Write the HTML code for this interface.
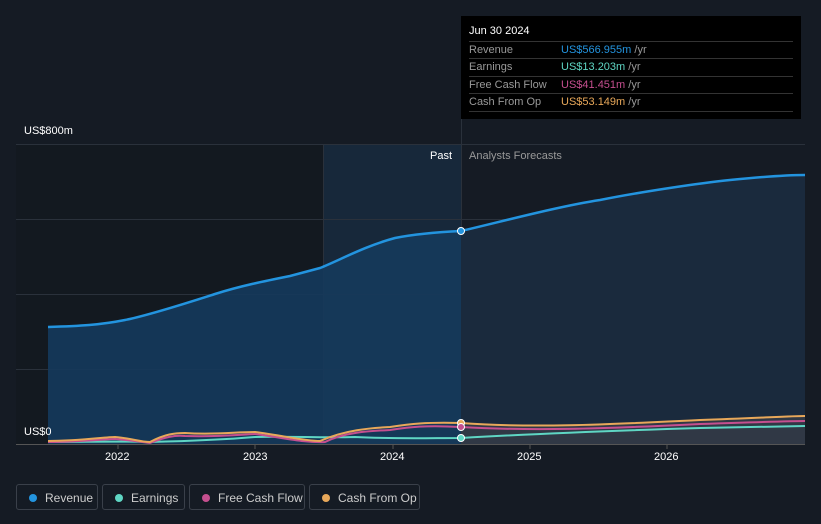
<!DOCTYPE html><html><head><style>
body{margin:0;background:#151b24;width:821px;height:524px;overflow:hidden;font-family:"Liberation Sans",sans-serif;position:relative}
.t{position:absolute;font-size:11px;color:#fff}
.tip{position:absolute;left:461px;top:16px;width:340px;height:103px;background:#000;}
.row{position:absolute;left:8px;width:324px;border-top:1px solid #333;height:17px;font-size:11px;color:#999;line-height:17px}
.row span{position:absolute;left:92px}
.leg{position:absolute;top:484px;height:26px;border:1px solid #3a404a;border-radius:3px;font-size:12px;color:#ccc;line-height:26px;box-sizing:border-box}
.leg i{position:absolute;left:12px;top:9px;width:8px;height:8px;border-radius:50%}
</style></head><body>
<svg width="821" height="524" style="position:absolute;left:0;top:0">
<rect x="16" y="144" width="307" height="300" fill="#131920"/>
<rect x="323" y="144" width="138" height="300" fill="#17283a"/>
<g stroke="#2a313b" stroke-width="1">
<line x1="16" y1="144.5" x2="805" y2="144.5"/><line x1="16" y1="219.5" x2="805" y2="219.5"/><line x1="16" y1="294.5" x2="805" y2="294.5"/><line x1="16" y1="369.5" x2="805" y2="369.5"/>
<line x1="323.5" y1="144" x2="323.5" y2="444"/><line x1="461.5" y1="118" x2="461.5" y2="444"/>
</g>
<path d="M48,327 C80,326 100,325 125,320 C150,315 190,302 215,294 C240,286 265,281 290,276 C305,272 320,268 320,268 C340,260 365,246 395,238 C415,234 440,232 461,231 L461,444 L48,444Z" fill="#153a5c" opacity="0.9"/>
<path d="M461,231 C500,222 560,206 600,200 C640,192 700,183 730,180 C760,177 790,175 805,175 L805,444 L461,444Z" fill="#1a2a3d"/>
<path d="M48,327 C80,326 100,325 125,320 C150,315 190,302 215,294 C240,286 265,281 290,276 C305,272 320,268 320,268 C340,260 365,246 395,238 C415,234 440,232 461,231 C500,222 560,206 600,200 C640,192 700,183 730,180 C760,177 790,175 805,175" fill="none" stroke="#2394df" stroke-width="2.5"/>
<path d="M461,423 C530,428 600,425 700,420 C760,418 790,416 805,416 L805,444 L461,444Z" fill="#3a3f48" opacity="0.7"/>
<path d="M48,442 C90,442 110,441 150,442 C190,441 220,440 255,437 C290,436 320,438 355,437 C390,439 430,438 461,438 C530,434 600,431 700,428 C760,427 790,426 805,426" fill="none" stroke="#5fd6c4" stroke-width="2"/>
<path d="M48,442 C80,442 105,439 115,439 C130,440 140,442 150,443 C165,437 175,435 185,436 C215,437 235,435 255,434 C285,438 305,443 325,442 C345,432 370,431 390,430 C410,427 425,425 461,427 C530,431 600,429 700,424 C760,422 790,421 805,421" fill="none" stroke="#c54f8f" stroke-width="2"/>
<path d="M48,441 C80,441 105,437 115,437 C130,438 140,442 150,442 C165,434 175,433 185,433 C215,435 235,432 255,432 C285,436 305,441 320,441 C345,430 370,428 390,427 C410,424 425,422 461,423 C530,428 600,425 700,420 C760,418 790,416 805,416" fill="none" stroke="#e8a85a" stroke-width="2"/>
<line x1="16" y1="444.5" x2="805" y2="444.5" stroke="#555"/>
<g stroke="#555"><line x1="118" y1="444" x2="118" y2="449"/><line x1="255" y1="444" x2="255" y2="449"/><line x1="393" y1="444" x2="393" y2="449"/><line x1="530" y1="444" x2="530" y2="449"/><line x1="667" y1="444" x2="667" y2="449"/></g>
<circle cx="461" cy="231" r="3.5" fill="#2394df" stroke="#fff"/>
<circle cx="461" cy="423" r="3.5" fill="#e8a85a" stroke="#fff"/>
<circle cx="461" cy="427" r="3.5" fill="#c54f8f" stroke="#fff"/>
<circle cx="461" cy="438" r="3.5" fill="#5fd6c4" stroke="#fff"/>
</svg>
<div class="t" style="left:24px;top:125px">US$800m</div>
<div class="t" style="left:24px;top:426px">US$0</div>
<div class="t" style="left:430px;top:150px">Past</div>
<div class="t" style="left:469px;top:150px;color:#999">Analysts Forecasts</div>
<div class="t" style="left:105px;top:451px">2022</div>
<div class="t" style="left:243px;top:451px">2023</div>
<div class="t" style="left:380px;top:451px">2024</div>
<div class="t" style="left:517px;top:451px">2025</div>
<div class="t" style="left:654px;top:451px">2026</div>
<div class="tip">
<div class="t" style="left:8px;top:9px">Jun 30 2024</div>
<div class="row" style="top:25px">Revenue<span style="color:#2394df">US$566.955m <b style="font-weight:normal;color:#999">/yr</b></span></div>
<div class="row" style="top:42px">Earnings<span style="color:#5fd6c4">US$13.203m <b style="font-weight:normal;color:#999">/yr</b></span></div>
<div class="row" style="top:60px">Free Cash Flow<span style="color:#c54f8f">US$41.451m <b style="font-weight:normal;color:#999">/yr</b></span></div>
<div class="row" style="top:77px;border-bottom:1px solid #333">Cash From Op<span style="color:#e8a85a">US$53.149m <b style="font-weight:normal;color:#999">/yr</b></span></div>
</div>
<div class="leg" style="left:16px;width:82px"><i style="background:#2394df"></i><span style="position:absolute;left:28px">Revenue</span></div>
<div class="leg" style="left:102px;width:83px"><i style="background:#5fd6c4"></i><span style="position:absolute;left:28px">Earnings</span></div>
<div class="leg" style="left:189px;width:116px"><i style="background:#c54f8f"></i><span style="position:absolute;left:28px">Free Cash Flow</span></div>
<div class="leg" style="left:309px;width:111px"><i style="background:#e8a85a"></i><span style="position:absolute;left:28px">Cash From Op</span></div>
</body></html>
